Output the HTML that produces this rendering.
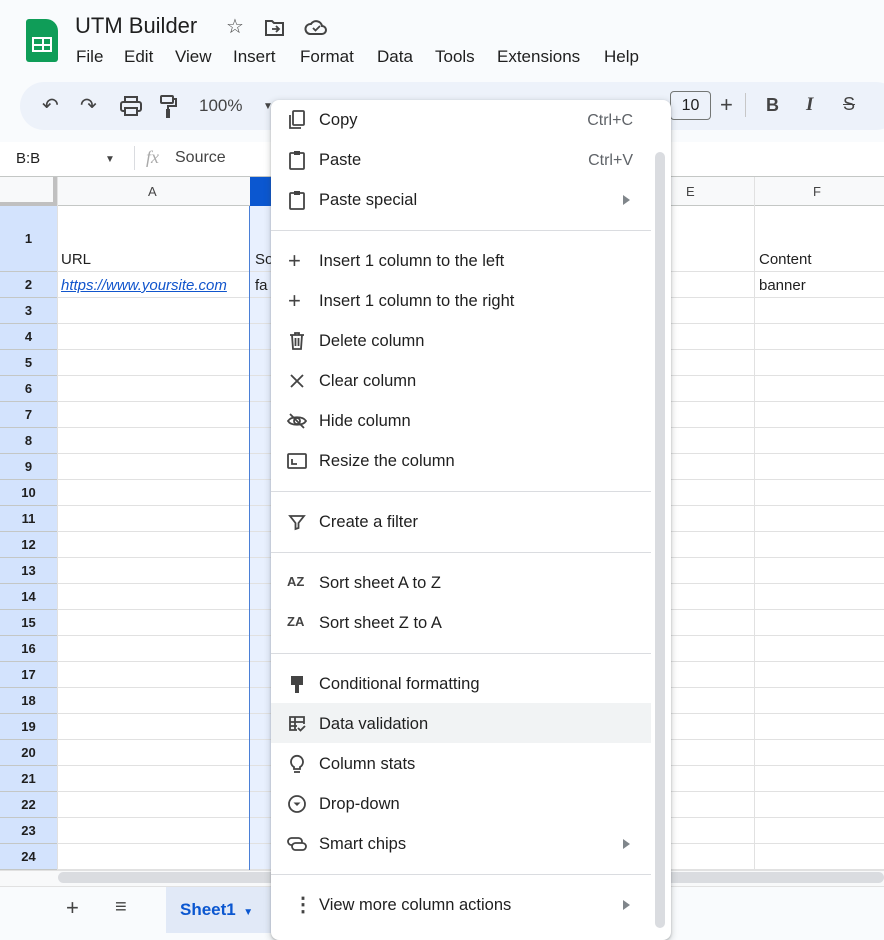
<!DOCTYPE html>
<html><head><meta charset="utf-8"><style>
*{margin:0;padding:0;box-sizing:border-box}
body{width:884px;height:933px;overflow:hidden;background:#f9fbfd;font-family:"Liberation Sans",Arial,sans-serif;color:#1f1f1f;position:relative}
.a{position:absolute}
.menu-t{position:absolute;left:48px;font-size:16.5px;color:#1f1f1f}
.sc{position:absolute;right:38px;font-size:16px;color:#5f6368}
.arr{position:absolute;left:352px;width:0;height:0;border-left:7px solid #80868b;border-top:5px solid transparent;border-bottom:5px solid transparent}
.sep{position:absolute;left:0;width:380px;height:1px;background:#dadce0}
.ic{position:absolute;left:16px;width:20px;height:20px}
.rh{position:absolute;left:0;width:57px;background:#d3e3fd;font-size:13px;font-weight:bold;color:#1f1f1f;text-align:center;border-bottom:1px solid #c4c7c5}
.hl{position:absolute;left:57px;width:827px;height:1px;background:#e1e1e1}
.mb{position:absolute;top:47px;font-size:17px;color:#1f1f1f}
</style></head><body>
<!-- header -->
<div class="a" style="left:26px;top:19px;width:32px;height:43px;background:#0f9d58;border-radius:3px 12px 3px 3px"></div>
<div class="a" style="left:32px;top:37px;width:20px;height:15px;border:2px solid #fff;background:linear-gradient(#fff,#fff) 8px 0/2px 100% no-repeat,linear-gradient(#fff,#fff) 0 4.5px/100% 2px no-repeat"></div>
<div class="a" style="left:75px;top:13px;font-size:22px;color:#1f1f1f">UTM Builder</div>
<div class="a" style="left:226px;top:14px;font-size:20px;color:#444">☆</div>
<svg class="a" style="left:264px;top:18px" width="22" height="20" viewBox="0 0 22 20"><path d="M2 3h6l2 2h9v12H2z" fill="none" stroke="#444" stroke-width="2"/><path d="M8 11h6m-2-3l3 3-3 3" fill="none" stroke="#444" stroke-width="1.8"/></svg>
<svg class="a" style="left:304px;top:17px" width="24" height="20" viewBox="0 0 24 20"><path d="M6 17h12a4 4 0 0 0 0-8 6 6 0 0 0-11-2A5 5 0 0 0 6 17z" fill="none" stroke="#444" stroke-width="2"/><path d="M9 11l2.5 2.5L16 9" fill="none" stroke="#444" stroke-width="1.8"/></svg>
<div class="mb" style="left:76px">File</div><div class="mb" style="left:124px">Edit</div><div class="mb" style="left:175px">View</div><div class="mb" style="left:233px">Insert</div><div class="mb" style="left:300px">Format</div><div class="mb" style="left:377px">Data</div><div class="mb" style="left:435px">Tools</div><div class="mb" style="left:497px">Extensions</div><div class="mb" style="left:604px">Help</div>
<!-- toolbar -->
<div class="a" style="left:20px;top:82px;width:880px;height:48px;background:#edf2fa;border-radius:24px"></div>
<div class="a" style="left:42px;top:93px;font-size:20px;color:#444">↶</div>
<div class="a" style="left:80px;top:93px;font-size:20px;color:#444">↷</div>
<svg class="a" style="left:120px;top:96px" width="22" height="20" viewBox="0 0 22 20"><rect x="5" y="1" width="12" height="5" fill="none" stroke="#444" stroke-width="2"/><rect x="1" y="6" width="20" height="9" rx="2" fill="none" stroke="#444" stroke-width="2"/><rect x="5" y="12" width="12" height="7" fill="#edf2fa" stroke="#444" stroke-width="2"/></svg>
<svg class="a" style="left:158px;top:95px" width="22" height="24" viewBox="0 0 22 24"><rect x="3" y="1" width="12" height="7" rx="1" fill="none" stroke="#444" stroke-width="2"/><path d="M15 4h3v7h-8v3" fill="none" stroke="#444" stroke-width="2"/><rect x="8" y="14" width="4" height="9" fill="#444"/></svg>
<div class="a" style="left:199px;top:96px;font-size:17px;color:#444">100%</div>
<div class="a" style="left:263px;top:101px;font-size:10px;color:#444">▼</div>
<div class="a" style="left:670px;top:91px;width:41px;height:29px;border:1px solid #747775;border-radius:4px;font-size:16px;text-align:center;line-height:27px">10</div>
<div class="a" style="left:720px;top:92px;font-size:22px;color:#444">+</div>
<div class="a" style="left:745px;top:93px;width:1px;height:24px;background:#c7c7c7"></div>
<div class="a" style="left:766px;top:95px;font-size:18px;font-weight:bold;color:#444">B</div>
<div class="a" style="left:806px;top:94px;font-size:19px;font-style:italic;font-family:'Liberation Serif',serif;font-weight:bold;color:#444">I</div>
<div class="a" style="left:843px;top:94px;font-size:18px;color:#444;text-decoration:line-through">S</div>
<!-- formula bar -->
<div class="a" style="left:0;top:142px;width:884px;height:35px;background:#fff"></div>
<div class="a" style="left:16px;top:150px;font-size:15px">B:B</div>
<div class="a" style="left:105px;top:154px;font-size:10px;color:#444">▼</div>
<div class="a" style="left:134px;top:146px;width:1px;height:24px;background:#dadce0"></div>
<div class="a" style="left:146px;top:147px;font-size:18px;color:#aaa;font-style:italic;font-family:'Liberation Serif',serif">fx</div>
<div class="a" style="left:175px;top:149px;font-size:16px;color:#444">Source</div>
<!-- grid -->
<div class="a" style="left:0;top:176px;width:884px;height:710px;background:#fff"></div>
<div class="a" style="left:0;top:176px;width:884px;height:1px;background:#c4c7c5"></div>
<div class="a" style="left:0;top:177px;width:57px;height:29px;background:#f8f9fa;border-right:4px solid #c0c0c0;border-bottom:4px solid #c0c0c0"></div>
<div class="a" style="left:57px;top:177px;width:827px;height:29px;background:#f8f9fa;border-bottom:1px solid #c4c7c5"></div>
<div class="a" style="left:148px;top:184px;font-size:13px;color:#444">A</div>
<div class="a" style="left:250px;top:177px;width:30px;height:29px;background:#0b57d0"></div>
<div class="a" style="left:686px;top:184px;font-size:13px;color:#444">E</div>
<div class="a" style="left:813px;top:184px;font-size:13px;color:#444">F</div>
<div class="a" style="left:250px;top:206px;width:30px;height:664px;background:#e8f0fe"></div>
<div class="a" style="left:57px;top:177px;width:1px;height:693px;background:#e1e1e1"></div>
<div class="a" style="left:754px;top:177px;width:1px;height:693px;background:#e1e1e1"></div>
<div class="a" style="left:670px;top:177px;width:1px;height:693px;background:#e1e1e1"></div>
<div id="rows"></div>
<div class="a" style="left:249px;top:206px;width:1px;height:664px;background:#4a7fd6"></div>
<div class="a" style="left:61px;top:251px;font-size:15px">URL</div>
<div class="a" style="left:255px;top:251px;font-size:15px">So</div>
<div class="a" style="left:759px;top:251px;font-size:15px">Content</div>
<div class="a" style="left:61px;top:277px;font-size:15px;color:#1155cc;font-style:italic;text-decoration:underline">https://www.yoursite.com</div>
<div class="a" style="left:255px;top:277px;font-size:15px">fa</div>
<div class="a" style="left:759px;top:277px;font-size:15px">banner</div>
<!-- scrollbar -->
<div class="a" style="left:0;top:870px;width:884px;height:16px;background:#f8f9fa;border-top:1px solid #e1e1e1"></div>
<div class="a" style="left:58px;top:872px;width:826px;height:11px;background:#dadce0;border-radius:6px"></div>
<!-- tabs -->
<div class="a" style="left:0;top:886px;width:884px;height:47px;background:#f9fbfd;border-top:1px solid #e1e1e1"></div>
<div class="a" style="left:66px;top:895px;font-size:22px;color:#444">+</div>
<div class="a" style="left:115px;top:896px;font-size:20px;color:#444">≡</div>
<div class="a" style="left:166px;top:887px;width:110px;height:46px;background:#e1e9f7"></div>
<div class="a" style="left:180px;top:900px;font-size:17px;color:#0b57d0;font-weight:bold">Sheet1 <span style="font-size:10px">&nbsp;▼</span></div>
<!-- menu -->
<div class="a" style="left:271px;top:100px;width:400px;height:840px;background:#fff;border-radius:8px;box-shadow:0 2px 6px 2px rgba(60,64,67,.15),0 1px 2px rgba(60,64,67,.3)">
 <div class="a" style="left:384px;top:52px;width:10px;height:776px;background:#dadce0;border-radius:5px"></div>
 <div class="a" style="left:0;top:603px;width:380px;height:40px;background:#f1f3f4"></div>
 <svg class="ic" style="top:10px" viewBox="0 0 20 20"><rect x="6" y="1" width="11" height="14" rx="1" fill="none" stroke="#444" stroke-width="1.8"/><path d="M3 5v13h11" fill="none" stroke="#444" stroke-width="1.8"/></svg>
 <div class="menu-t" style="top:11px">Copy</div><div class="sc" style="top:12px">Ctrl+C</div>
 <svg class="ic" style="top:50px" viewBox="0 0 20 20"><rect x="3" y="3" width="14" height="16" rx="1" fill="none" stroke="#444" stroke-width="1.8"/><rect x="7" y="1" width="6" height="4" fill="#444"/></svg>
 <div class="menu-t" style="top:51px">Paste</div><div class="sc" style="top:52px">Ctrl+V</div>
 <svg class="ic" style="top:90px" viewBox="0 0 20 20"><rect x="3" y="3" width="14" height="16" rx="1" fill="none" stroke="#444" stroke-width="1.8"/><rect x="7" y="1" width="6" height="4" fill="#444"/></svg>
 <div class="menu-t" style="top:91px">Paste special</div><div class="arr" style="top:95px"></div>
 <div class="sep" style="top:130px"></div>
 <div class="menu-t" style="left:17px;top:148px;font-size:22px;color:#444">+</div>
 <div class="menu-t" style="top:152px">Insert 1 column to the left</div>
 <div class="menu-t" style="left:17px;top:188px;font-size:22px;color:#444">+</div>
 <div class="menu-t" style="top:192px">Insert 1 column to the right</div>
 <svg class="ic" style="top:231px" viewBox="0 0 20 20"><path d="M3 4h14M8 4V2h4v2M5 4l1 14h8l1-14M8.5 7v8M11.5 7v8" fill="none" stroke="#444" stroke-width="1.8"/></svg>
 <div class="menu-t" style="top:232px">Delete column</div>
 <svg class="ic" style="top:271px" viewBox="0 0 20 20"><path d="M4 4l12 12M16 4L4 16" stroke="#444" stroke-width="1.8"/></svg>
 <div class="menu-t" style="top:272px">Clear column</div>
 <svg class="ic" style="top:311px" viewBox="0 0 20 20"><path d="M1 10c3-5 15-5 18 0c-3 5-15 5-18 0z" fill="none" stroke="#444" stroke-width="1.8"/><circle cx="10" cy="10" r="3" fill="none" stroke="#444" stroke-width="1.8"/><path d="M3 3l14 14" stroke="#444" stroke-width="1.8"/></svg>
 <div class="menu-t" style="top:312px">Hide column</div>
 <svg class="ic" style="top:351px" viewBox="0 0 20 20"><rect x="1" y="3" width="18" height="14" rx="1" fill="none" stroke="#444" stroke-width="1.8"/><path d="M5 8v5h5" fill="none" stroke="#444" stroke-width="1.8"/></svg>
 <div class="menu-t" style="top:352px">Resize the column</div>
 <div class="sep" style="top:391px"></div>
 <svg class="ic" style="top:412px" viewBox="0 0 20 20"><path d="M3 4h14l-5.5 7v5l-3 1v-6z" fill="none" stroke="#444" stroke-width="1.8"/></svg>
 <div class="menu-t" style="top:413px">Create a filter</div>
 <div class="sep" style="top:452px"></div>
 <div class="menu-t" style="left:16px;top:474px;font-size:13px;color:#444;font-weight:bold">AZ</div>
 <div class="menu-t" style="top:474px">Sort sheet A to Z</div>
 <div class="menu-t" style="left:16px;top:514px;font-size:13px;color:#444;font-weight:bold">ZA</div>
 <div class="menu-t" style="top:514px">Sort sheet Z to A</div>
 <div class="sep" style="top:553px"></div>
 <svg class="ic" style="top:574px" viewBox="0 0 20 20"><path d="M4 2h12v9H4z" fill="#444"/><rect x="8" y="11" width="4" height="8" fill="#444"/></svg>
 <div class="menu-t" style="top:575px">Conditional formatting</div>
 <svg class="ic" style="top:614px" viewBox="0 0 20 20"><path d="M10 16H3V3h14v7M3 8h14M3 12h7M8 3v13" fill="none" stroke="#444" stroke-width="1.8"/><path d="M11 14l2.5 2.5L18 12" fill="none" stroke="#444" stroke-width="1.8"/></svg>
 <div class="menu-t" style="top:615px">Data validation</div>
 <svg class="ic" style="top:654px" viewBox="0 0 20 20"><path d="M7 13a6 6 0 1 1 6 0v2H7z" fill="none" stroke="#444" stroke-width="1.8"/><path d="M7 18h6" stroke="#444" stroke-width="1.8"/></svg>
 <div class="menu-t" style="top:655px">Column stats</div>
 <svg class="ic" style="top:694px" viewBox="0 0 20 20"><circle cx="10" cy="10" r="8" fill="none" stroke="#444" stroke-width="1.8"/><path d="M6.5 8.5l3.5 3.5 3.5-3.5z" fill="#444"/></svg>
 <div class="menu-t" style="top:695px">Drop-down</div>
 <svg class="ic" style="top:734px" viewBox="0 0 20 20"><rect x="1" y="4" width="14" height="7" rx="3.5" fill="none" stroke="#444" stroke-width="1.8"/><rect x="5" y="9" width="14" height="7" rx="3.5" fill="#fff" stroke="#444" stroke-width="1.8"/></svg>
 <div class="menu-t" style="top:735px">Smart chips</div><div class="arr" style="top:739px"></div>
 <div class="sep" style="top:774px"></div>
 <div class="menu-t" style="left:22px;top:792px;font-size:20px;color:#444;font-weight:bold">⋮</div>
 <div class="menu-t" style="top:796px">View more column actions</div><div class="arr" style="top:800px"></div>
</div>
<script>
var h='';
h+='<div class="rh" style="top:206px;height:66px;line-height:66px">1</div><div class="hl" style="top:271px"></div>';
h+='<div class="rh" style="top:272px;height:26px;line-height:26px">2</div><div class="hl" style="top:297px"></div>';
for(var n=3;n<=24;n++){var t=298+(n-3)*26;h+='<div class="rh" style="top:'+t+'px;height:26px;line-height:26px">'+n+'</div><div class="hl" style="top:'+(t+25)+'px"></div>';}
document.getElementById('rows').innerHTML=h;
</script>
</body></html>
